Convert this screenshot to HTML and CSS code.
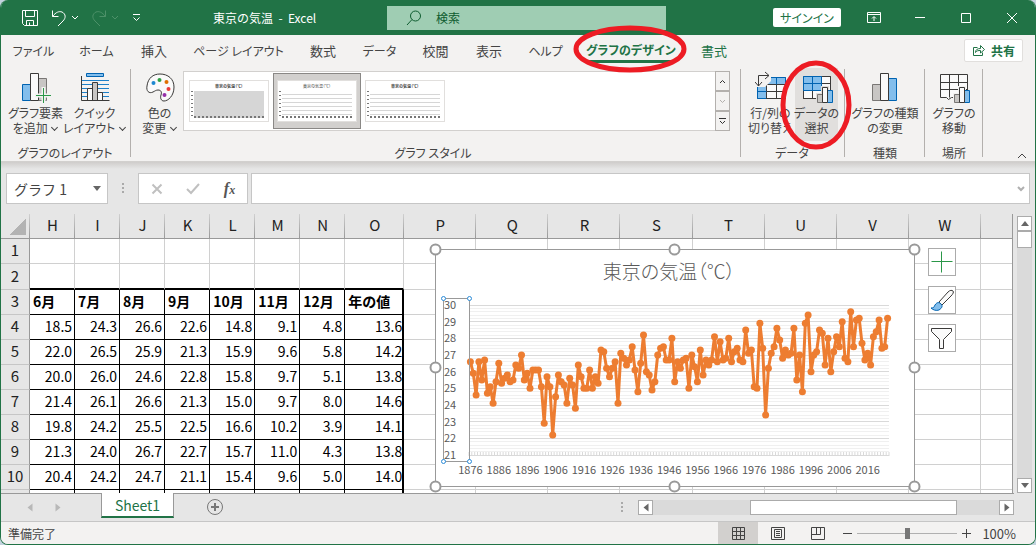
FILE: index.html
```html
<!DOCTYPE html>
<html lang="ja">
<head>
    <meta charset="UTF-8">
    <meta name="viewport" content="width=device-width, initial-scale=1.0">
    <title>東京の気温 - Excel</title>
    <link rel="stylesheet" href="styles.css">
</head>
<body>
<div class="window">
    <header class="titlebar">
        <div class="quick-access">
            <button type="button" aria-label="上書き保存">
                <svg width="18" height="18" viewBox="0 0 18 18"><path d="M1.500 1.500h15v15H3.500l-2-2zM4.500 1.500v6h9v-6M5.500 16.500v-5h7v5M8.500 13.500v3"/></svg>
            </button>
            <button type="button" class="undo" aria-label="元に戻す">
                <svg width="28" height="18" viewBox="0 0 28 18"><path d="M1.500 1.500v6h6M1.500 7.500C5 3 8 2 11 3c4 2 4 6 1 9l-5 5M21 7l3 3 3-3"/></svg>
            </button>
            <button type="button" class="redo" aria-label="やり直し" disabled>
                <svg width="28" height="18" viewBox="0 0 28 18"><path d="M14.500 1.500v6h-6M14.500 7.500C11 3 8 2 5 3c-4 2-4 6-1 9l5 5M21 7l3 3 3-3"/></svg>
            </button>
            <button type="button" class="customize" aria-label="クイック アクセスのカスタマイズ">
                <svg width="9" height="8" viewBox="0 0 9 8"><path d="M1 .500h7M1.500 3.500l3 3 3-3"/></svg>
            </button>
            <span class="doc-title">東京の気温&nbsp; -&nbsp; Excel</span>
        </div>
        <label class="search">
            <svg width="16" height="16" viewBox="0 0 16 16"><circle cx="9.500" cy="6" r="5"/><path d="M6 9.500L1 15"/></svg>
            <input type="text" placeholder="検索" aria-label="検索">
        </label>
        <div class="window-buttons">
            <button type="button" class="signin">サインイン</button>
            <button type="button" aria-label="リボンの表示オプション"><svg width="14" height="12" viewBox="0 0 14 12"><path d="M.500.500h13v10H.500zM.500 2.500h13M7 9V5M5 6.500l2-2 2 2"/></svg></button>
            <button type="button" aria-label="最小化"><svg width="12" height="12" viewBox="0 0 12 12"><path d="M1 5.500h10"/></svg></button>
            <button type="button" aria-label="最大化"><svg width="12" height="12" viewBox="0 0 12 12"><path d="M1.500 1.500h9v9h-9z"/></svg></button>
            <button type="button" aria-label="閉じる"><svg width="12" height="12" viewBox="0 0 12 12"><path d="M1 1l10 10M11 1L1 11"/></svg></button>
        </div>
    </header>

    <nav class="tabs">
        <a href="#" class="kana">ファイル</a>
        <a href="#" class="kana">ホーム</a>
        <a href="#">挿入</a>
        <a href="#" class="kana">ページ レイアウト</a>
        <a href="#">数式</a>
        <a href="#" class="kana">データ</a>
        <a href="#">校閲</a>
        <a href="#">表示</a>
        <a href="#" class="kana">ヘルプ</a>
        <a href="#" class="context kana active"><span>グラフのデザイン</span>
            <svg class="mark mark-tab" width="114" height="48" viewBox="0 0 114 48"><ellipse cx="57" cy="24" rx="54" ry="21"/></svg>
        </a>
        <a href="#" class="context">書式</a>
        <button type="button" class="share">
            <svg width="13" height="13" viewBox="0 0 13 13"><path d="M5.500 3.500h-4v8h9v-3M3.500 8.500c0-3 2-4 5-4v-3l4 4-4 3.500V6.500c-2 0-4 0-5 2z"/></svg>共有
        </button>
    </nav>

    <section class="ribbon">
        <div class="group">
            <div class="group-body">
                <button type="button" class="tool tool-wide">
                    <svg width="32" height="32" viewBox="0 0 32 32">
                        <path class="blue" d="M2.500 13.500h8v16h-8z"/>
                        <path class="gray" d="M18.500 7.500h8v22h-8z"/>
                        <path class="white" d="M10.500 2.500h8v27h-8z"/>
                        <path class="halo" d="M23.500 16v16M15 24.500h16"/>
                        <path class="green-line" d="M23.500 17v15M16 24.500h15"/>
                    </svg>
                    <span>グラフ要素</span><span>を追加 <i class="chev"></i></span>
                </button>
                <button type="button" class="tool tool-wide">
                    <svg width="32" height="32" viewBox="0 0 32 32">
                        <path class="blue" d="M7.500 2.500h17v3h-17z"/>
                        <path class="blue-line" d="M3 9.500h27M3 13.500h27M3 17.500h27M3 21.500h27M3 25.500h27"/>
                        <path class="white" d="M8.500 17.500h5v12h-5zM18.500 21.500h5v8h-5z"/>
                        <path class="gray dark" d="M13.500 11.500h5v18h-5z"/>
                        <path class="dark-line" d="M2.500 5v24.500h28"/>
                    </svg>
                    <span>クイック</span><span>レイアウト <i class="chev"></i></span>
                </button>
            </div>
            <div class="group-name">グラフのレイアウト</div>
        </div>

        <div class="group group-styles">
            <div class="group-body">
                <button type="button" class="tool tool-color">
                    <svg width="32" height="32" viewBox="0 0 32 32">
                        <path class="white" d="M3 15C4 7 9 3 16 3c8 0 14 5 14 13 0 9-6 14-10 14-3 0-4-3-3-6s0-5-3-5c-2 0-3 1-5 2-4 2-7-1-6-6z"/>
                        <circle cx="9.500" cy="12" r="2" fill="#1e88d0"/>
                        <circle cx="15.500" cy="9" r="2" fill="#2ea043"/>
                        <circle cx="22.500" cy="11" r="2" fill="#e07000"/>
                        <circle cx="24.500" cy="18" r="2" fill="#e83b3b"/>
                        <circle cx="20.500" cy="24" r="2" fill="#9530a8"/>
                    </svg>
                    <span>色の</span><span>変更 <i class="chev"></i></span>
                </button>
                <div class="gallery">
                    <button type="button" class="thumb filled" aria-label="スタイル 1"><span class="thumb-card"><span class="thumb-title">東京の気温（℃）</span><span class="thumb-plot"></span></span></button>
                    <button type="button" class="thumb soft selected" aria-label="スタイル 2"><span class="thumb-card"><span class="thumb-title">東京の気温（℃）</span><span class="thumb-plot"></span></span></button>
                    <button type="button" class="thumb" aria-label="スタイル 3"><span class="thumb-card"><span class="thumb-title">東京の気温（℃）</span><span class="thumb-plot"></span></span></button>
                    <div class="gallery-scroll">
                        <button type="button" aria-label="前の行"><svg width="7" height="7" viewBox="0 0 7 7"><path d="M1 5l2.500-2.500L6 5"/></svg></button>
                        <button type="button" aria-label="次の行" disabled><svg width="7" height="7" viewBox="0 0 7 7"><path d="M1 2l2.500 2.500L6 2"/></svg></button>
                        <button type="button" aria-label="その他"><svg width="7" height="8" viewBox="0 0 7 8"><path d="M0 1.500h7M1 4l2.500 2.500L6 4"/></svg></button>
                    </div>
                </div>
            </div>
            <div class="group-name">グラフ スタイル</div>
        </div>

        <div class="group">
            <div class="group-body">
                <button type="button" class="tool tool-swap">
                    <svg width="32" height="32" viewBox="0 0 32 32">
                        <path class="white" d="M2.500 6.500h28v21h-28z"/>
                        <path class="blue" d="M12.500 6.500h18v7h-18zM2.500 13.500h9v14h-9z"/>
                        <path class="dark-line" d="M11.500 13.500h19M11.500 20.500h19M11.500 13.500v14M21.500 13.500v14M11.500 27.500h19v-14"/>
                        <path class="blue" d="M21.500 6.500v7M2.500 20.500h9"/>
                        <path class="mask" d="M0 0h16v10l-6 6H0z"/>
                        <path class="dark-line" d="M3.500 15V4.500H14M0 11l3.500 4L7 11M10 1l4 3.500L10 8"/>
                    </svg>
                    <span>行/列の</span><span>切り替え</span>
                </button>
                <button type="button" class="tool tool-select">
                    <svg width="32" height="32" viewBox="0 0 32 32">
                        <path class="white" d="M2.500 5.500h27v22h-27z"/>
                        <path class="dark-line" d="M2.500 20v7.500h18M11.500 20v7M20.500 6v14M20 12.500h9.500v-7H20"/>
                        <path class="blue" d="M2.500 5.500h18v14h-18zM2.500 12.500h18M11.500 5.500v14"/>
                        <path class="mask" d="M15 22h5v-7h8v4h4v13H15z"/>
                        <path class="gray" d="M16.500 23.500h5v8h-5z"/>
                        <path class="blue" d="M26.500 19.500h5v12h-5z"/>
                        <path class="white" d="M21.500 16.500h5v15h-5z"/>
                    </svg>
                    <span>データの</span><span>選択</span>
                    <svg class="mark mark-tool" width="74" height="92" viewBox="0 0 74 92"><ellipse cx="37" cy="46" rx="33" ry="42"/></svg>
                </button>
            </div>
            <div class="group-name">データ</div>
        </div>

        <div class="group group-type">
            <div class="group-body">
                <button type="button" class="tool">
                    <svg width="32" height="32" viewBox="0 0 32 32">
                        <path class="gray" d="M3.500 13.500h8v16h-8z"/>
                        <path class="blue" d="M19.500 7.500h8v22h-8z"/>
                        <path class="white" d="M11.500 2.500h8v27h-8z"/>
                    </svg>
                    <span>グラフの種類</span><span>の変更</span>
                </button>
            </div>
            <div class="group-name">種類</div>
        </div>

        <div class="group group-place">
            <div class="group-body">
                <button type="button" class="tool">
                    <svg width="32" height="32" viewBox="0 0 32 32">
                        <path class="white" d="M2.500 3.500h27v23l-16 0-3 2-2-2h-6z"/>
                        <path class="dark-line" d="M2.500 11.500h27M2.500 18.500h27M11.500 3.500v23M20.500 3.500v23"/>
                        <path class="mask" d="M15 22h5v-7h8v4h4v13H15z"/>
                        <path class="gray" d="M16.500 23.500h5v8h-5z"/>
                        <path class="blue" d="M26.500 19.500h5v12h-5z"/>
                        <path class="white" d="M21.500 16.500h5v15h-5z"/>
                    </svg>
                    <span>グラフの</span><span>移動</span>
                </button>
            </div>
            <div class="group-name">場所</div>
        </div>
        <button type="button" class="collapse" aria-label="リボンを折りたたむ"><svg width="10" height="6" viewBox="0 0 10 6"><path d="M1 5l4-4 4 4"/></svg></button>
    </section>

    <section class="formula-bar">
        <div class="name-box">
            <input type="text" value="グラフ 1" aria-label="名前ボックス">
            <button type="button" aria-label="名前の一覧"><i class="tri"></i></button>
        </div>
        <i class="dots"></i>
        <div class="fx-buttons">
            <button type="button" aria-label="キャンセル" disabled><svg width="12" height="12" viewBox="0 0 12 12"><path d="M1.500 1.500l9 9M10.500 1.500l-9 9"/></svg></button>
            <button type="button" aria-label="入力" disabled><svg width="14" height="12" viewBox="0 0 14 12"><path d="M1 6l4 4 8-9"/></svg></button>
            <button type="button" class="fx" aria-label="関数の挿入">f<small>x</small></button>
        </div>
        <div class="formula">
            <input type="text" aria-label="数式バー">
            <svg width="8" height="6" viewBox="0 0 8 6"><path d="M1 1l3 3 3-3"/></svg>
        </div>
    </section>

    <main class="workspace">
        <div class="sheet">
            <table id="grid">
                <colgroup>
                    <col class="c-num">
                    <col span="7" class="c-month">
                    <col class="c-year">
                    <col span="9" class="c-blank">
                </colgroup>
                <thead></thead>
                <tbody></tbody>
            </table>

            <svg class="chart" id="chart" width="480" height="238" viewBox="0 0 480 238" role="img" aria-label="東京の気温（℃）"></svg>

            <div class="chart-tools">
                <button type="button" aria-label="グラフ要素"><svg width="26" height="26" viewBox="0 0 26 26"><path class="green-line" d="M2.500 12.500h21M12.500 2.500v21"/></svg></button>
                <button type="button" aria-label="グラフ スタイル"><svg width="26" height="26" viewBox="0 0 26 26">
                    <path class="white" d="M10 15l9-10c2-2 4-2 5-1s0 3-2 5L13 18z"/>
                    <path class="blue" d="M2 21c3 0 3-1 4-3 2-3 4-3 6-1s1 4-2 6c-3 1-6 0-8-2z"/>
                </svg></button>
                <button type="button" aria-label="グラフ フィルター"><svg width="26" height="26" viewBox="0 0 26 26"><path class="white" d="M2.500 3.500h20v3l-8 8v9h-4v-9l-8-8z"/></svg></button>
            </div>
        </div>
        <div class="vscroll">
            <button type="button" aria-label="上へ"><i class="tri up"></i></button>
            <div class="vtrack"><div class="vthumb"></div></div>
            <button type="button" aria-label="下へ"><i class="tri"></i></button>
        </div>
    </main>

    <div class="sheet-bar">
        <div class="sheet-nav"><i class="tri left"></i><i class="tri right"></i></div>
        <button type="button" class="sheet-tab">Sheet1</button>
        <button type="button" class="add-sheet" aria-label="新しいシート"><svg width="18" height="18" viewBox="0 0 18 18"><circle cx="9" cy="9" r="7.500"/><path d="M9 5v8M5 9h8"/></svg></button>
        <i class="dots"></i>
        <div class="hscroll">
            <button type="button" aria-label="左へ"><i class="tri left"></i></button>
            <div class="htrack"><div class="hthumb"></div></div>
            <button type="button" aria-label="右へ"><i class="tri right"></i></button>
        </div>
    </div>

    <footer class="status">
        <span class="ready">準備完了</span>
        <button type="button" class="view on" aria-label="標準"><svg width="13" height="13" viewBox="0 0 13 13"><path d="M.500.500h12v12H.500zM.500 4.500h12M.500 8.500h12M4.500.500v12M8.500.500v12"/></svg></button>
        <button type="button" class="view" aria-label="ページ レイアウト"><svg width="14" height="13" viewBox="0 0 14 13"><path d="M.500.500h13v12H.500zM3.500 2.500h7v8h-7zM5 4.500h4M5 6.500h4M5 8.500h4"/></svg></button>
        <button type="button" class="view" aria-label="改ページ プレビュー"><svg width="14" height="13" viewBox="0 0 14 13"><path d="M.500.500h13v12H.500zM5.500.500v7M9.500.500v7M.500 7.500h9"/></svg></button>
        <button type="button" class="zoom-step" aria-label="縮小"><svg width="9" height="9" viewBox="0 0 9 9"><path d="M0 4.500h9"/></svg></button>
        <input type="range" min="0" max="100" value="50" aria-label="ズーム">
        <button type="button" class="zoom-step" aria-label="拡大"><svg width="9" height="9" viewBox="0 0 9 9"><path d="M0 4.500h9M4.500 0v9"/></svg></button>
        <span class="zoom">100%</span>
    </footer>
</div>
<script src="script.js"></script>
</body>
</html>
```

FILE: styles.css
```css
* {
    box-sizing: border-box;
}
body {
    margin: 0;
    background: #c3d3de;
    font-family: "Noto Sans CJK JP", sans-serif;
    font-size: 12px;
    color: #444;
}
button, input {
    font: inherit;
    color: inherit;
    margin: 0;
    padding: 0;
    border: 0;
    background: none;
}
button {
    display: flex;
    align-items: center;
    justify-content: center;
}
svg {
    display: block;
    flex: none;
    fill: none;
    stroke: currentColor;
}
.window {
    display: flex;
    flex-direction: column;
    height: 100vh;
    border: 1px solid #217346;
    border-top: 0;
    border-radius: 8px;
    overflow: hidden;
    background: #e6e6e6;
}

/* タイトルバー */
.titlebar {
    display: grid;
    grid-template-columns: 386px minmax(160px, 279px) 1fr;
    align-items: center;
    height: 35px;
    flex: none;
    background: #217346;
    color: #fff;
}
.quick-access {
    display: flex;
    align-items: center;
    padding-left: 20px;
}
.undo {
    margin-left: 12px;
}
.redo {
    margin-left: 12px;
    color: #4d9169;
}
.customize {
    margin-left: 13px;
}
.doc-title {
    margin-left: 72px;
    white-space: nowrap;
}
.search {
    display: flex;
    align-items: center;
    height: 24px;
    padding-left: 19px;
    gap: 14px;
    background: #9fcdb3;
    color: #0e5c2f;
}
.search input {
    width: 100%;
    outline: 0;
}
.search input::placeholder {
    color: #0e5c2f;
    opacity: 1;
}
.window-buttons {
    display: flex;
    align-items: center;
    justify-content: flex-end;
}
.window-buttons button {
    width: 46px;
    height: 34px;
}
.window-buttons .signin {
    width: 68px;
    height: 19px;
    margin-right: 10px;
    border-radius: 2px;
    background: #fff;
    color: #217346;
    font-feature-settings: "palt";
}

/* リボン タブ */
.tabs {
    display: grid;
    grid-template-columns: 65px 61px 54px 115px 54px 59px 53px 54px 59px 112px 54px 1fr;
    height: 31px;
    flex: none;
    background: #f3f2f1;
    font-feature-settings: "palt";
}
.tabs a {
    position: relative;
    display: flex;
    align-items: center;
    justify-content: center;
    color: #444;
    font-size: 13px;
    text-decoration: none;
    white-space: nowrap;
}
.tabs .kana {
    font-size: 12px;
}
.tabs .context {
    color: #217346;
}
.tabs .active {
    padding-top: 2px;
    font-weight: bold;
}
.active span {
    line-height: 20px;
    border-bottom: 3px solid #217346;
}
.share {
    justify-self: end;
    align-self: center;
    gap: 6px;
    width: 59px;
    height: 23px;
    margin-right: 12px;
    border: 1px solid #e1dfdd;
    border-radius: 2px;
    background: #fff;
    color: #217346;
    font-weight: bold;
}
.mark {
    position: absolute;
    z-index: 2;
    stroke: #ed1c24;
    stroke-width: 5;
    pointer-events: none;
}
.mark-tab {
    left: -2px;
    top: -10px;
}
.mark-tool {
    left: -16px;
    top: -9px;
}

/* リボン */
.ribbon {
    position: relative;
    display: flex;
    height: 96px;
    flex: none;
    padding-top: 2px;
    background: #f3f2f1;
    border-bottom: 1px solid #d2d0ce;
    font-feature-settings: "palt";
}
.group {
    position: relative;
    display: flex;
    flex-direction: column;
    padding: 0 7px 0 5px;
}
.group::after {
    content: "";
    position: absolute;
    right: 0;
    top: 1px;
    bottom: 4px;
    border-right: 1px solid #b3b0ad;
}
.group-styles {
    flex: 1;
    padding: 0 11px 0 5px;
}
.group-body {
    display: flex;
    flex: 1;
    justify-content: center;
}
.group-name {
    height: 17px;
    line-height: 17px;
    text-align: center;
}
.tool {
    position: relative;
    flex-direction: column;
    justify-content: flex-start;
    height: 73px;
    padding-top: 3px;
    line-height: 15px;
    white-space: nowrap;
}
.tool svg:first-child {
    margin-bottom: 2px;
}
.tool-wide {
    width: 59px;
}
.tool-color {
    width: 47px;
}
.tool-swap {
    width: 49px;
}
.tool-select {
    width: 43px;
    background: #e1dfdd;
}
.group-type, .group-place {
    padding: 0;
    width: 80px;
}
.group-place {
    width: 58px;
    margin-right: 52px;
}
.chev {
    display: inline-block;
    width: 5px;
    height: 5px;
    margin: 0 1px 3px 2px;
    border: solid #444;
    border-width: 0 1px 1px 0;
    transform: rotate(45deg);
}
.blue { fill: #83beec; stroke: #0063b1; }
.white { fill: #fafafa; stroke: #3b3a39; }
.gray { fill: #c8c6c4; stroke: #797775; }
.gray.dark { stroke: #3b3a39; }
.mask { fill: #f3f2f1; stroke: none; }
.tool-select .mask { fill: #e1dfdd; }
.halo { stroke: #f3f2f1; stroke-width: 4; }
.green-line { stroke: #2b9748; stroke-width: 1; }
.blue-line { stroke: #1e80c8; }
.dark-line { stroke: #3b3a39; }
.tool circle { stroke: none; }
.collapse {
    position: absolute;
    right: 8px;
    bottom: 2px;
}

.gallery {
    display: flex;
    flex: 1;
    height: 60px;
    margin-top: 3px;
    padding-left: 1px;
    border: 1px solid #d2d0ce;
    background: #fff;
}
.thumb {
    width: 88px;
    height: 56px;
    margin-top: 1px;
    flex: none;
}
.thumb.selected {
    background: #d2d0ce;
    border: 1px solid #8a8886;
}
.thumb-card {
    display: flex;
    flex-direction: column;
    align-items: center;
    width: 80px;
    height: 42px;
    padding: 2px;
    border: 1px solid #e1dfdd;
    background: #fff;
}
.thumb-title {
    font-size: 4px;
    font-weight: bold;
    line-height: 6px;
}
.soft .thumb-title {
    font-weight: normal;
}
.thumb-plot {
    width: 70px;
    height: 27px;
    margin-top: 2px;
    border-bottom: 2px dotted #777;
    background: repeating-linear-gradient(#fff 0 3px, #d6d6d6 3px 4px);
}
.thumb-plot::before {
    content: "";
    display: block;
    width: 2px;
    height: 25px;
    margin-left: -3px;
    background: repeating-linear-gradient(#777 0 1px, #fff 1px 4px);
}
.filled .thumb-plot {
    background: #d6d6d6;
}
.gallery-scroll {
    display: grid;
    grid-template-rows: repeat(3, 20px);
    width: 15px;
    margin: -1px -1px -1px auto;
}
.gallery-scroll button {
    border: 1px solid #b3b0ad;
    background: #f3f2f1;
    color: #333;
}
.gallery-scroll button:disabled {
    color: #b3b0ad;
}

/* 数式バー */
.formula-bar {
    display: flex;
    height: 52px;
    flex: none;
    padding: 11px 5px 10px;
    background: linear-gradient(#cfcdcb, #e6e6e6 7px);
}
.name-box, .fx-buttons, .formula {
    display: flex;
    align-items: center;
    border: 1px solid #c6c6c6;
    background: #fff;
}
.name-box {
    width: 102px;
    padding-left: 7px;
    font-size: 14px;
}
.name-box input {
    flex: 1;
    min-width: 0;
}
.name-box button {
    width: 20px;
    height: 28px;
}
.dots {
    width: 2px;
    height: 10px;
    background: repeating-linear-gradient(#aaa 0 2px, transparent 2px 4px);
}
.formula-bar .dots {
    margin: 10px 14px;
}
.fx-buttons {
    width: 110px;
    justify-content: space-around;
    color: #c0c0c0;
    stroke-width: 2;
}
.fx {
    color: #555;
    font: italic bold 16px "Liberation Serif", serif;
}
.fx small {
    font-size: 12px;
    padding-top: 4px;
}
.formula {
    flex: 1;
    margin-left: 3px;
    padding-right: 4px;
    color: #b0b0b0;
    stroke-width: 2;
}
.formula input {
    flex: 1;
}
.tri {
    border: 4px solid transparent;
    border-top: 5px solid #666;
    border-bottom: 0;
}
.tri.up {
    transform: rotate(180deg);
}
.tri.left {
    transform: rotate(90deg);
}
.tri.right {
    transform: rotate(-90deg);
}

/* シート */
.workspace {
    display: flex;
    flex: 1;
    min-height: 0;
}
.sheet {
    position: relative;
    flex: 1;
    min-width: 0;
    overflow: hidden;
    border-right: 1px solid #999;
}
#grid {
    table-layout: fixed;
    width: 1052px;
    border-spacing: 0;
    background: #fff;
    color: #222;
    font-size: 14px;
    line-height: 20px;
}
.c-num { width: 29px; }
.c-month { width: 45px; }
.c-year { width: 59px; }
.c-blank { width: 72px; }
#grid tr {
    height: 25px;
}
#grid tr.before-data {
    height: 26px;
}
#grid th, #grid td {
    padding: 0 2px 2px 3px;
    border-right: 1px solid #d0d0d0;
    border-bottom: 1px solid #d0d0d0;
    overflow: hidden;
    white-space: nowrap;
}
#grid thead th, #grid .row-num {
    padding: 0 0 2px;
    background: #e6e6e6;
    color: #222;
    font-size: 15px;
    font-weight: normal;
    text-align: center;
}
#grid thead th {
    border-right: 0;
    border-bottom: 1px solid #999;
    background: linear-gradient(#d0d0d0, #999) right / 1px 100% no-repeat #e6e6e6;
}
#grid .row-num {
    border-right: 1px solid #999;
    border-bottom-color: #c6c6c6;
}
#grid thead .corner {
    background: linear-gradient(135deg, transparent 50%, #b3b3b3 50%) 8px 4px / 17px 17px no-repeat, linear-gradient(#d0d0d0, #999) right / 1px 100% no-repeat #e6e6e6;
}
#grid .data {
    border-color: #000;
    color: #000;
}
#grid td.data {
    text-align: right;
}
#grid th.data {
    text-align: left;
}
#grid .before-data .top-edge {
    border-bottom: 2px solid #000;
}
#grid .last {
    padding-right: 0;
    border-right-width: 2px;
}
.chart {
    position: absolute;
    left: 434px;
    top: 35px;
    overflow: visible;
    background: #fff;
    font-size: 11px;
}
.chart text {
    fill: #595959;
    stroke: none;
}
.chart .title {
    font-size: 19px;
    font-weight: 300;
    font-feature-settings: "palt";
    text-anchor: middle;
}
.chart .year {
    text-anchor: middle;
}
.chart .minor { stroke: #f0f0f0; }
.chart .major { stroke: #d9d9d9; }
.chart .frame { stroke: #999; }
.chart .axis-frame { stroke: #999; stroke-width: 1; }
.chart .handle { fill: #fff; stroke: #999; stroke-width: 2; }
.chart .axis-handle { fill: #fff; stroke: #2b8bd8; }
.chart .series { stroke: #ed7d31; stroke-width: 3; stroke-linejoin: round; }
.chart .point { fill: #ed7d31; stroke: none; }
.chart-tools {
    position: absolute;
    left: 927px;
    top: 34px;
    display: grid;
    gap: 10px;
}
.chart-tools button {
    width: 28px;
    height: 28px;
    border: 1px solid #ababab;
    background: #fff;
}
.vscroll {
    display: flex;
    flex-direction: column;
    width: 22px;
    padding: 2px 3px 0 4px;
}
.vscroll button, .hscroll button {
    width: 15px;
    height: 15px;
    flex: none;
    border: 1px solid #ababab;
    background: #fff;
}
.vtrack {
    flex: 1;
    background: #dadada;
}
.vthumb {
    height: 17px;
    border: 1px solid #ababab;
    background: #fff;
}

/* シート見出し */
.sheet-bar {
    display: flex;
    align-items: center;
    height: 28px;
    flex: none;
    background: linear-gradient(#999, #999) left top / calc(100% - 21px) 1px no-repeat;
}
.sheet-nav {
    display: flex;
    align-items: center;
    gap: 20px;
    width: 100px;
    padding-left: 25px;
}
.sheet-nav .tri {
    border-top-color: #b8b8b8;
}
.sheet-tab {
    align-self: flex-start;
    width: 73px;
    height: 25px;
    border: solid #999;
    border-width: 0 1px 0;
    border-bottom: 2px solid #217346;
    background: #fff;
    color: #217346;
    font-size: 14px;
}
.add-sheet {
    margin-left: 32px;
    color: #777;
}
.add-sheet path {
    stroke-width: 2;
}
.sheet-bar > .dots {
    margin-left: auto;
}
.hscroll {
    display: flex;
    width: 376px;
    margin: 0 21px 0 15px;
}
.htrack {
    flex: 1;
    padding-left: 97px;
    background: #dadada;
}
.hthumb {
    width: 207px;
    height: 15px;
    border: 1px solid #ababab;
    background: #fff;
}

/* ステータスバー */
.status {
    display: flex;
    align-items: center;
    height: 23px;
    flex: none;
    padding-right: 19px;
    border-top: 1px solid #c6c6c6;
    background: #f3f2f1;
}
.ready {
    margin: 0 auto 0 7px;
}
.view {
    width: 40px;
    height: 22px;
}
.view.on {
    background: #d2d0ce;
}
.zoom-step {
    margin: 0 5px;
}
.status input {
    width: 100px;
    height: 14px;
    appearance: none;
    background: linear-gradient(#b0b0b0, #b0b0b0) center / 100% 1px no-repeat;
}
.status input::-webkit-slider-thumb {
    appearance: none;
    width: 5px;
    height: 11px;
    background: #777;
}
.zoom {
    width: 40px;
    font-size: 13px;
    text-align: right;
}
```

FILE: script.js
```js
const columns = ['H', 'I', 'J', 'K', 'L', 'M', 'N', 'O', 'P', 'Q', 'R', 'S', 'T', 'U', 'V', 'W', 'X'];
const months = ['6月', '7月', '8月', '9月', '10月', '11月', '12月', '年の値'];
const temperatures = [
    ['18.5', '24.3', '26.6', '22.6', '14.8', '9.1', '4.8', '13.6'],
    ['22.0', '26.5', '25.9', '21.3', '15.9', '9.6', '5.8', '14.2'],
    ['20.0', '26.0', '24.6', '22.8', '15.8', '9.7', '5.1', '13.8'],
    ['21.4', '26.1', '26.6', '21.3', '15.0', '9.7', '8.0', '14.6'],
    ['19.8', '24.2', '25.5', '22.5', '16.6', '10.2', '3.9', '14.1'],
    ['21.3', '24.0', '26.7', '22.7', '15.7', '11.0', '4.3', '13.8'],
    ['20.4', '24.2', '24.7', '21.1', '15.4', '9.6', '5.0', '14.0']
];

// 1876年からの8月の平均気温
const august = [
    26.6, 25.9, 24.6, 26.6, 25.5, 26.7, 24.7, 25.1, 24.1, 25.4,
    26.5, 25.3, 25.6, 25.8, 25.4, 25.5, 26.4, 26.2, 27.0, 25.5,
    25.9, 25.0, 26.1, 26.1, 26.1, 25.1, 22.9, 25.7, 25.1, 22.2,
    24.5, 25.8, 25.4, 25.2, 24.1, 25.6, 25.2, 23.8, 26.4, 25.7,
    25.0, 25.0, 26.1, 25.0, 25.7, 25.3, 27.3, 27.2, 26.2, 25.7,
    26.2, 26.6, 24.1, 27.1, 26.8, 26.4, 26.7, 27.5, 26.1, 24.8,
    26.5, 28.2, 26.0, 25.8, 24.9, 25.4, 27.0, 27.4, 27.5, 26.7,
    26.7, 28.0, 25.4, 26.6, 26.2, 26.7, 26.8, 25.0, 27.0, 26.3,
    25.4, 27.3, 25.8, 26.7, 26.4, 26.7, 28.1, 26.6, 27.8, 26.7,
    26.8, 28.0, 26.6, 27.2, 27.4, 26.7, 26.6, 28.5, 27.1, 27.3,
    25.1, 25.0, 28.9, 27.4, 23.4, 26.2, 27.1, 27.5, 28.6, 27.9,
    26.8, 27.3, 27.0, 27.1, 28.6, 25.5, 27.0, 24.8, 28.9, 29.4,
    26.0, 27.0, 27.2, 28.5, 28.3, 26.4, 28.0, 26.0, 27.2, 28.1,
    27.5, 29.0, 26.8, 26.6, 29.6, 27.5, 29.1, 29.2, 27.7, 26.7,
    27.1, 26.4, 28.1, 28.4, 29.1, 27.4, 27.5, 29.2
];

function drawGrid() {
    const grid = document.getElementById('grid');
    grid.tHead.innerHTML = '<tr><th class="corner"></th>' + columns.map(c => `<th>${c}</th>`).join('') + '</tr>';

    let rows = '';
    for (let r = 1; r <= 11; r++) {
        // 最後の行は罫線だけが見える
        rows += `<tr class="${r === 2 ? 'before-data' : ''}"><th class="row-num">${r <= 10 ? r : ''}</th>`;
        columns.forEach((name, c) => {
            const last = c === months.length - 1 ? ' last' : '';
            if (c >= months.length) {
                rows += '<td></td>';
            } else if (r < 3) {
                rows += '<td class="top-edge"></td>';
            } else if (r === 3) {
                rows += `<th class="data${last}">${months[c]}</th>`;
            } else {
                const row = temperatures[r - 4];
                rows += `<td class="data${last}">${row ? row[c] : ''}</td>`;
            }
        });
        rows += '</tr>';
    }
    grid.tBodies[0].innerHTML = rows;
}

function drawChart() {
    const left = 34, right = 454, top = 56, bottom = 206;
    const step = (right - left) / august.length;
    const x = i => (left + step * (i + 0.5)).toFixed(1);
    const y = v => (bottom - (v - 21) * (bottom - top) / 9).toFixed(1);
    const snap = v => Math.floor(y(v)) + 0.5;
    let svg = '<rect class="frame" x=".5" y=".5" width="479" height="237"/>';
    svg += '<text class="title" x="234" y="30">東京の気温（℃）</text>';

    for (let n = 0; n < 45; n++) {
        svg += `<path class="minor" d="M${left} ${snap(21 + n / 5)}H${right}"/>`;
    }
    for (let v = 21; v <= 30; v++) {
        svg += `<path class="major" d="M${left} ${snap(v)}H${right}"/>`;
        svg += `<text x="9" y="${Number(y(v)) + 4}">${v}</text>`;
    }
    for (let i = 0; i <= august.length; i++) {
        svg += `<path class="major" d="M${(left + step * i).toFixed(1)} 203v4"/>`;
    }
    for (let i = 0; i < august.length; i += 10) {
        svg += `<text class="year" x="${x(i)}" y="225">${1876 + i}</text>`;
    }

    svg += `<polyline class="series" points="${august.map((v, i) => x(i) + ',' + y(v)).join(' ')}"/>`;
    august.forEach((v, i) => {
        svg += `<circle class="point" cx="${x(i)}" cy="${y(v)}" r="3.5"/>`;
    });

    // 選択枠とハンドル
    svg += '<rect class="axis-frame" x="8.5" y="49.5" width="26" height="163"/>';
    [[8, 49], [34, 49], [8, 212], [34, 212]].forEach(p => {
        svg += `<circle class="axis-handle" cx="${p[0]}.5" cy="${p[1]}.5" r="2"/>`;
    });
    [[0, 0], [239, 0], [479, 0], [0, 118], [479, 118], [0, 237], [239, 237], [479, 237]].forEach(p => {
        svg += `<circle class="handle" cx="${p[0]}.5" cy="${p[1]}.5" r="5"/>`;
    });
    document.getElementById('chart').innerHTML = svg;
}

drawGrid();
drawChart();
```
